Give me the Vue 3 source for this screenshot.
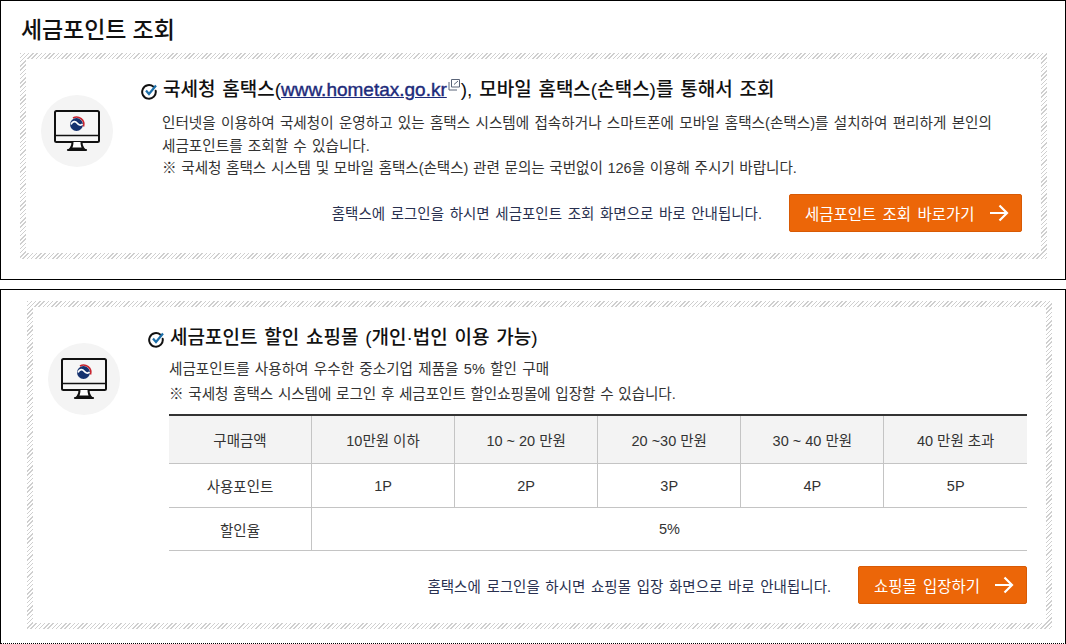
<script setup>
const heads = ['10만원 이하', '10 ~ 20 만원', '20 ~30 만원', '30 ~ 40 만원', '40 만원 초과']
const points = ['1P', '2P', '3P', '4P', '5P']
</script>

<template>
  <div class="page">
    <section class="panel first">
      <h1 class="title">세금포인트 조회</h1>
      <div class="hatch one">
        <div class="inner">
          <div class="badge">
            <svg width="46" height="42" viewBox="0 0 46 42" fill="none">
              <rect x="1" y="1" width="44" height="31" rx="1.5" fill="#f6f6f6" stroke="#111" stroke-width="2"/>
              <path d="M1 25.500H45" stroke="#111" stroke-width="1.500"/>
              <path d="M18.500 32c0 3-.5 5-2 6.500h13c-1.500-1.500-2-3.500-2-6.500" fill="#fff" stroke="#111" stroke-width="2"/>
              <path d="M14 40h18" stroke="#111" stroke-width="2.200" stroke-linecap="round"/>
              <circle cx="22.500" cy="14.500" r="6.500" fill="#15326f"/>
              <path d="M19 8a7.300 7.300 0 0 1 10.500 8.500" stroke="#c8242f" stroke-width="1.600"/>
              <path d="M17 14.500c1.500-3.500 4.500-3.500 6-1.500s4 3 5.500 1" stroke="#fff" stroke-width="1.700"/>
            </svg>
          </div>
          <div class="body">
            <h2 class="head">
              <svg class="check" width="17" height="17" viewBox="0 0 17 17" fill="none">
                <path d="M12.500 3.800A6.800 6.800 0 1 0 14.700 7.800" stroke="#111" stroke-width="2" stroke-linecap="round"/>
                <path d="M5 7.500l3 3.500 7-8.500" stroke="#1c6ea8" stroke-width="2.200"/>
              </svg>
              <span>국세청 홈택스(<a class="link">www.hometax.go.kr</a><svg class="ext" width="13" height="13" viewBox="0 0 13 13" fill="none"><path d="M3.500 1.500h8v7.500h-8zM1 4v8h8" stroke="#5a6478" stroke-width="1"/><path d="M6 6.500l4-3.500" stroke="#5a6478"/></svg>), 모바일 홈택스(손택스)를 통해서 조회</span>
            </h2>
            <p class="desc wide">인터넷을 이용하여 국세청이 운영하고 있는 홈택스 시스템에 접속하거나 스마트폰에 모바일 홈택스(손택스)를 설치하여 편리하게 본인의 세금포인트를 조회할 수 있습니다.</p>
            <p class="desc tight">※ 국세청 홈택스 시스템 및 모바일 홈택스(손택스) 관련 문의는 국번없이 126을 이용해 주시기 바랍니다.</p>
            <div class="action one-action">
              <span class="note">홈택스에 로그인을 하시면 세금포인트 조회 화면으로 바로 안내됩니다.</span>
              <a class="btn big">
                세금포인트 조회 바로가기
                <svg width="20" height="18" viewBox="0 0 20 18" fill="none"><path d="M1 9H18M10.500 1.500L18 9l-7.500 7.500" stroke="#fff" stroke-width="2.200"/></svg>
              </a>
            </div>
          </div>
        </div>
      </div>
    </section>

    <section class="panel second">
      <div class="hatch two">
        <div class="inner">
          <div class="badge">
            <svg width="46" height="42" viewBox="0 0 46 42" fill="none">
              <rect x="1" y="1" width="44" height="31" rx="1.5" fill="#f6f6f6" stroke="#111" stroke-width="2"/>
              <path d="M1 25.500H45" stroke="#111" stroke-width="1.500"/>
              <path d="M18.500 32c0 3-.5 5-2 6.500h13c-1.500-1.500-2-3.500-2-6.500" fill="#fff" stroke="#111" stroke-width="2"/>
              <path d="M14 40h18" stroke="#111" stroke-width="2.200" stroke-linecap="round"/>
              <circle cx="22.500" cy="14.500" r="6.500" fill="#15326f"/>
              <path d="M19 8a7.300 7.300 0 0 1 10.500 8.500" stroke="#c8242f" stroke-width="1.600"/>
              <path d="M17 14.500c1.500-3.500 4.500-3.500 6-1.500s4 3 5.500 1" stroke="#fff" stroke-width="1.700"/>
            </svg>
          </div>
          <div class="body">
            <h2 class="head">
              <svg class="check" width="17" height="17" viewBox="0 0 17 17" fill="none">
                <path d="M12.500 3.800A6.800 6.800 0 1 0 14.700 7.800" stroke="#111" stroke-width="2" stroke-linecap="round"/>
                <path d="M5 7.500l3 3.500 7-8.500" stroke="#1c6ea8" stroke-width="2.200"/>
              </svg>
              <span>세금포인트 할인 쇼핑몰 (개인·법인 이용 가능)</span>
            </h2>
            <p class="desc">세금포인트를 사용하여 우수한 중소기업 제품을 5% 할인 구매</p>
            <p class="desc tight">※ 국세청 홈택스 시스템에 로그인 후 세금포인트 할인쇼핑몰에 입장할 수 있습니다.</p>
            <table class="tbl">
              <tbody>
                <tr class="hd">
                  <th>구매금액</th>
                  <td v-for="h in heads" :key="h">{{ h }}</td>
                </tr>
                <tr>
                  <th>사용포인트</th>
                  <td v-for="p in points" :key="p">{{ p }}</td>
                </tr>
                <tr class="last">
                  <th>할인율</th>
                  <td colspan="5">5%</td>
                </tr>
              </tbody>
            </table>
            <div class="action two-action">
              <span class="note">홈택스에 로그인을 하시면 쇼핑몰 입장 화면으로 바로 안내됩니다.</span>
              <a class="btn small">
                쇼핑몰 입장하기
                <svg width="20" height="18" viewBox="0 0 20 18" fill="none"><path d="M1 9H18M10.500 1.500L18 9l-7.500 7.500" stroke="#fff" stroke-width="2.200"/></svg>
              </a>
            </div>
          </div>
        </div>
      </div>
    </section>
  </div>
</template>

<style scoped>
.page {
  width: 1066px;
  height: 644px;
  background: #fff;
  font-family: "Liberation Sans", "Noto Sans CJK KR", "Noto Sans", sans-serif;
  color: #333;
  display: flex;
  flex-direction: column;
  gap: 9px;
  box-sizing: border-box;
  overflow: hidden;
}
.panel {
  border: 1px solid #000;
  box-sizing: border-box;
}
.first { height: 280px; padding: 0 18px 0 19px; }
.second { height: 355px; padding: 11px 13px 14px 26px; border-bottom-style: dotted; }
.title {
  margin: 0;
  height: 52px;
  padding: 14px 0 0 1px;
  box-sizing: border-box;
  font-size: 23px;
  line-height: 30px;
  font-weight: 500;
  color: #111;
  letter-spacing: -0.1px;
}
.hatch {
  padding: 6px;
  box-sizing: border-box;
  background: repeating-linear-gradient(135deg, #cfcfcf 0 1px, #fff 1px 3px);
}
.one { height: 206px; }
.two { height: 328px; }
.inner {
  background: #fff;
  height: 100%;
  display: flex;
  box-sizing: border-box;
  padding: 0 19px 0 15px;
}
.badge {
  width: 72px;
  height: 72px;
  border-radius: 50%;
  background: #f4f4f4;
  display: flex;
  align-items: center;
  justify-content: center;
  flex: none;
  margin-top: 36px;
}
.body { flex: 1; min-width: 0; margin-left: 28px; padding-top: 17px; }
.head {
  margin: 0 0 8px;
  display: flex;
  align-items: center;
  font-size: 19px;
  line-height: 28px;
  font-weight: 500;
  color: #111;
  word-spacing: 1.500px;
  white-space: nowrap;
}
.two .head { margin-bottom: 4.500px; }
.check { margin-right: 5px; margin-top: 2px; flex: none; }
.link { color: #1d2b7a; text-decoration: underline; -webkit-text-stroke: 0.4px #1d2b7a; }
.ext { vertical-align: 5px; margin-left: 1px; }
.desc {
  margin: 0 0 0 21px;
  font-size: 14.600px;
  line-height: 22.500px;
  color: #333;
  word-spacing: 1.200px;
  word-break: keep-all;
}
.tight { letter-spacing: -0.08px; word-spacing: 0.800px; }
.two .desc { line-height: 25px; }
.wide { max-width: 850px; }
.action {
  display: flex;
  justify-content: flex-end;
  align-items: center;
  gap: 27px;
}
.one-action { margin-top: 14px; }
.two-action { margin-top: 15px; }
.note { font-size: 14.500px; color: #28304f; word-spacing: 1.600px; }
.btn {
  background: #ec6608;
  border: 1px solid #d85a05;
  border-radius: 2px;
  color: #fff;
  display: flex;
  align-items: center;
  justify-content: space-between;
  box-sizing: border-box;
  height: 38px;
  font-size: 15.500px;
  word-spacing: 2px;
  padding: 0 12px 0 15px;
}
.big { width: 233px; }
.small { width: 169px; }
.tbl {
  margin: 7.500px 0 0 21px;
  width: 858px;
  border-collapse: collapse;
  border-top: 2px solid #333;
  table-layout: fixed;
  font-size: 14.500px;
  color: #333;
}
.tbl th, .tbl td {
  border-bottom: 1px solid #c4c4c4;
  border-left: 1px solid #c4c4c4;
  text-align: center;
  font-weight: 400;
  height: 43px;
  padding: 0;
}
.tbl th { border-left: 0; width: 142px; }
.hd th, .hd td { background: #f3f3f3; height: 47px; }
.last th, .last td { height: 42px; }
</style>
